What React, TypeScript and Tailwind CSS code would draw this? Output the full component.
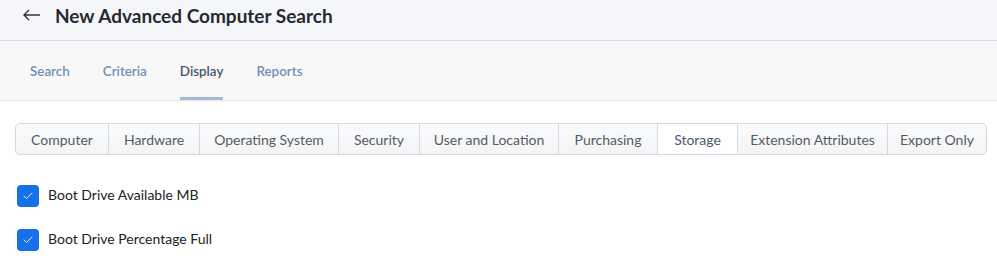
import { Check } from "lucide-react"

const navTabs = ["Search", "Criteria", "Display", "Reports"]

const segments = [
  { label: "Computer", w: "w-[92px]" },
  { label: "Hardware", w: "w-[91px]" },
  { label: "Operating System", w: "w-[139px]" },
  { label: "Security", w: "w-[81px]" },
  { label: "User and Location", w: "w-[139px]" },
  { label: "Purchasing", w: "w-[99px]" },
  { label: "Storage", w: "w-[80px]", active: true },
  { label: "Extension Attributes", w: "w-[150px]" },
  { label: "Export Only", w: "flex-1" },
]

const fields = ["Boot Drive Available MB", "Boot Drive Percentage Full"]

export default function App() {
  return (
    <div className="min-h-screen bg-white font-['Lato','Liberation_Sans',sans-serif]">
      {/* Header */}
      <div className="h-[41px] bg-[#f5f6f9] border-b border-[#d9dce2] flex items-center pl-[22px] gap-[14px]">
        <svg className="w-[19px] h-[12px] text-[#333] -mt-[10px]" viewBox="0 0 19 12" fill="none" stroke="currentColor" strokeWidth={1.4}>
          <path d="M18 6H2M7 1L2 6l5 5" />
        </svg>
        <h1 className="text-[19px] font-bold text-[#262a30] -mt-[10px] leading-none">New Advanced Computer Search</h1>
      </div>

      {/* Tabs */}
      <div className="h-[60px] bg-[#f8f8f8] border-b border-[#e9e9ea] shadow-[0_1px_2px_rgba(0,0,0,0.05)] flex items-end pl-[30px] gap-[33px]">
        {navTabs.map((t) => (
          <div
            key={t}
            className={
              "h-[43px] pt-[4px] text-[13.4px] font-semibold border-b-[3px] " +
              (t === "Display" ? "text-[#475670] border-[#a3bad6]" : "text-[#7190b9] border-transparent")
            }
          >
            {t}
          </div>
        ))}
      </div>

      {/* Segmented control */}
      <div className="pl-[15px] pr-[10px] pt-[22px]">
        <div className="h-[32px] flex rounded-[5px] border border-[#d6d9dd] overflow-hidden bg-gradient-to-b from-[#fafbfc] to-[#f3f4f6]">
          {segments.map((s, i) => (
            <div
              key={s.label}
              className={
                s.w +
                " flex items-center justify-center text-[14px] " +
                (i > 0 ? "border-l border-[#d6d9dd] " : "") +
                (s.active ? "bg-white text-[#4b5873]" : "text-[#565b62]")
              }
            >
              {s.label}
            </div>
          ))}
        </div>
      </div>

      {/* Fields */}
      <div className="px-[17px] pt-[30px] flex flex-col gap-[22px]">
        {fields.map((f) => (
          <div key={f} className="flex items-center gap-[9px]">
            <div className="w-[22px] h-[22px] rounded-[4px] bg-[#1570ea] flex items-center justify-center">
              <Check className="w-[12px] h-[12px] text-white" strokeWidth={1.75} />
            </div>
            <span className="text-[14px] text-[#222] -mt-[3px]">{f}</span>
          </div>
        ))}
      </div>
    </div>
  )
}
